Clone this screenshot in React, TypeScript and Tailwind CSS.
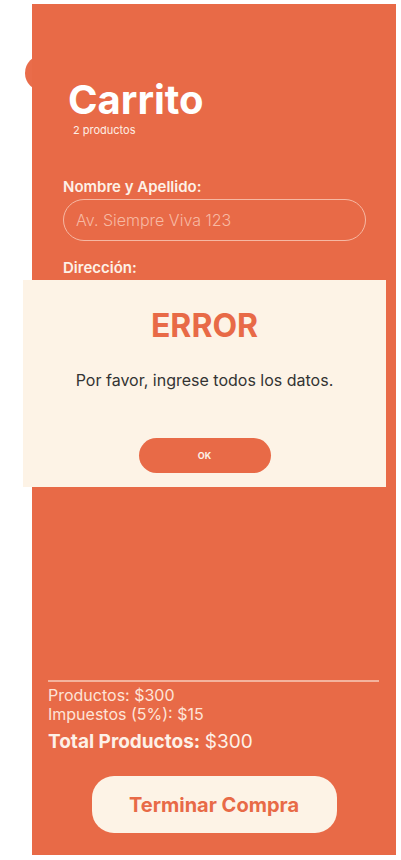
import React from 'react';

const font = { fontFamily: 'Inter, "Liberation Sans", sans-serif' };

export default function App() {
  return (
    <div className="relative w-[401px] h-[860px] bg-white overflow-hidden" style={font}>
      {/* back button peeking out behind the panel */}
      <div className="absolute left-[25px] top-[55px] w-[36px] h-[36px] rounded-full bg-[#e96c4a]" />

      {/* Cart panel */}
      <div className="relative ml-[32px] mt-[4px] w-[364px] h-[851px] bg-[#e86a47] flex flex-col">
        <div className="pl-[36px] pt-[76px]">
          <h1 className="text-[40px] font-bold leading-none text-white">Carrito</h1>
          <p className="mt-[5px] ml-[5px] text-[11px] leading-none text-[#fdeee4]">2 productos</p>
        </div>

        <div className="px-[31px] pt-[43px]">
          <label className="block text-[15px] font-semibold leading-none text-[#fdf1e7]">Nombre y Apellido:</label>
          <div className="mt-[5px] h-[42px] w-[303px] rounded-full border border-[#f6b8a3] flex items-center px-[12px]">
            <span className="text-[16px] font-light text-[#f7b9a3]">Av. Siempre Viva 123</span>
          </div>
          <label className="block mt-[19px] text-[15px] font-semibold leading-none text-[#fdf1e7]">Dirección:</label>
        </div>

        <div className="mt-auto px-[16px] pb-[22px]">
          <div className="h-[2px] w-[331px] bg-[#f4b39d]" />
          <p className="mt-[4px] text-[16px] leading-[19px] text-[#fde4d8]">Productos: $300</p>
          <p className="text-[16px] leading-[19px] text-[#fde4d8]">Impuestos (5%): $15</p>
          <p className="mt-[6px] text-[19px] leading-[24px] font-bold text-[#fdf1e7]">
            Total Productos: <span className="font-normal">$300</span>
          </p>
          <div className="mt-[22px] flex justify-center">
            <button className="w-[245px] h-[57px] rounded-[22px] bg-[#fdf3e6] text-[20px] font-bold text-[#e86a47]">
              Terminar Compra
            </button>
          </div>
        </div>
      </div>

      {/* Error modal */}
      <div className="absolute left-[23px] top-[280px] w-[363px] h-[207px] bg-[#fdf3e6] flex flex-col items-center">
        <h2 className="mt-[30px] text-[32px] font-bold leading-none text-[#e86a47]">ERROR</h2>
        <p className="mt-[30px] text-[16px] leading-none text-[#333333]">Por favor, ingrese todos los datos.</p>
        <button className="mt-[50px] w-[132px] h-[35px] rounded-full bg-[#e86a47] text-[9px] font-bold text-[#fdf1e7]">
          OK
        </button>
      </div>
    </div>
  );
}
